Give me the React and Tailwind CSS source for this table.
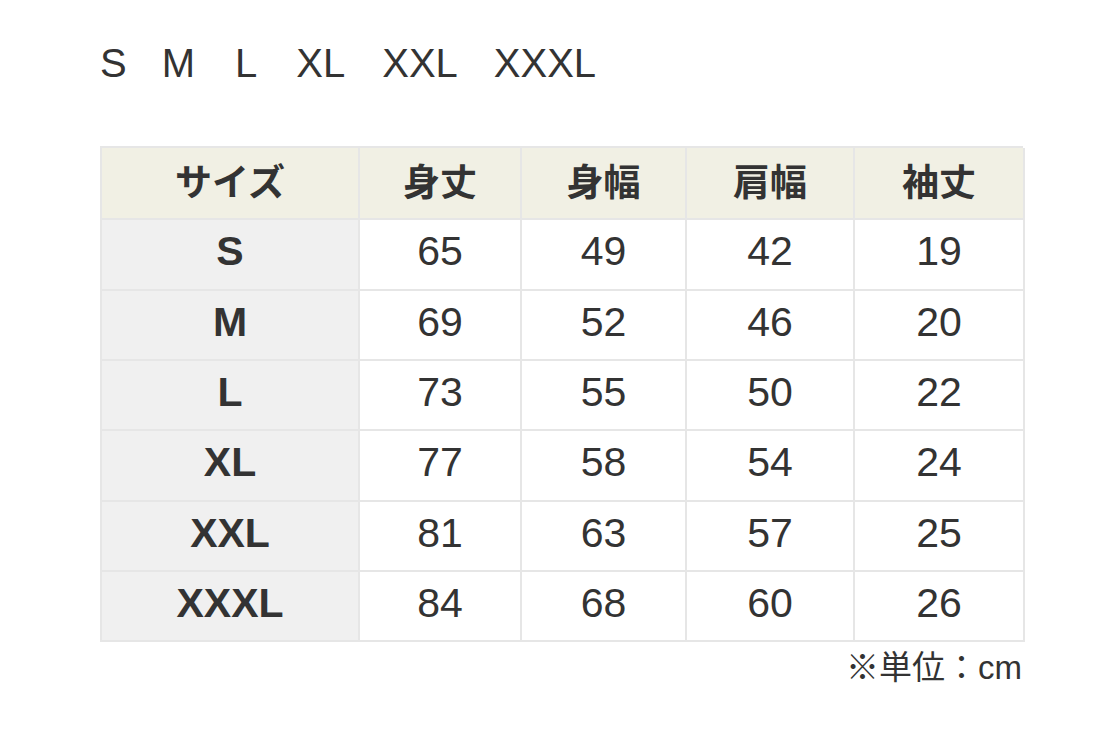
import React from 'react';

const headers = ['サイズ', '身丈', '身幅', '肩幅', '袖丈'];

const rows = [
  ['S', 65, 49, 42, 19],
  ['M', 69, 52, 46, 20],
  ['L', 73, 55, 50, 22],
  ['XL', 77, 58, 54, 24],
  ['XXL', 81, 63, 57, 25],
  ['XXXL', 84, 68, 60, 26],
];

const fontStack = { fontFamily: '"Liberation Sans", "Noto Sans CJK JP", sans-serif' };

export default function App() {
  return (
    <div className="w-[1117px] h-[748px] bg-white text-[#333333] overflow-hidden" style={fontStack}>
      {/* size list */}
      <div className="flex pl-[100px] pt-[43px] text-[40px] leading-none">
        <span>S</span>
        <span className="ml-[35px]">M</span>
        <span className="ml-[40px]">L</span>
        <span className="ml-[39px]">XL</span>
        <span className="ml-[37px]">XXL</span>
        <span className="ml-[36px]">XXXL</span>
      </div>

      {/* table */}
      <div className="ml-[100px] mt-[63px] w-[923px]">
        <div className="grid grid-cols-[258px_162px_165px_168px_170px] grid-rows-[72px_71px_70px_70px_71px_70px_70px] border-t-2 border-l-2 border-[#e6e6e6]">
          {headers.map((h) => (
            <div
              key={h}
              className="flex items-center justify-center bg-[#f1f0e4] border-r-2 border-b-2 border-[#e6e6e6] text-[37px] font-bold leading-none"
            >
              {h}
            </div>
          ))}
          {rows.map((r) =>
            r.map((v, i) => (
              <div
                key={r[0] + '-' + i}
                className={
                  i === 0
                    ? 'flex items-center justify-center pb-[6px] bg-[#f0f0f0] border-r-2 border-b-2 border-[#e6e6e6] text-[41px] font-bold leading-none'
                    : 'flex items-center justify-center pb-[6px] bg-white border-r-2 border-b-2 border-[#e6e6e6] text-[41px] leading-none'
                }
              >
                {v}
              </div>
            ))
          )}
        </div>
        <div className="flex justify-end pt-[9px] pr-[1px] text-[33px] leading-none">
          ※単位：cm
        </div>
      </div>
    </div>
  );
}
